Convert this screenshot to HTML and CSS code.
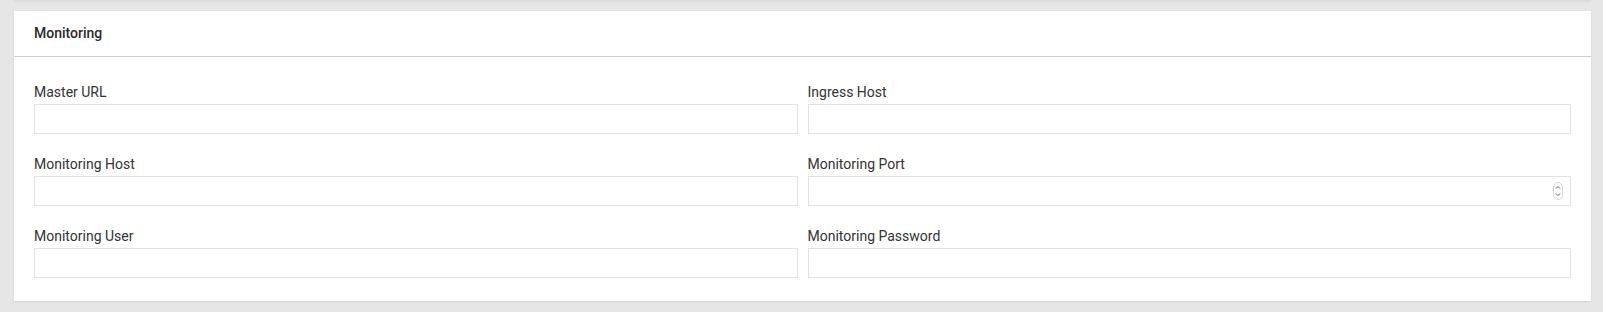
FILE: index.html
```html
<!DOCTYPE html>
<html lang="en">
<head>
    <meta charset="UTF-8">
    <meta name="viewport" content="width=device-width, initial-scale=1.0">
    <title>Monitoring</title>
    <link rel="stylesheet" href="styles.css">
</head>
<body>
    <div class="page">
        <div class="prev-shadow"></div>
        <div class="panel">
            <div class="panel-heading">Monitoring</div>
            <form class="panel-body">
                <div class="form-group">
                    <label for="master_url">Master URL</label>
                    <input type="text" id="master_url" name="master_url">
                </div>
                <div class="form-group">
                    <label for="ingress_host">Ingress Host</label>
                    <input type="text" id="ingress_host" name="ingress_host">
                </div>
                <div class="form-group">
                    <label for="monitoring_host">Monitoring Host</label>
                    <input type="text" id="monitoring_host" name="monitoring_host">
                </div>
                <div class="form-group">
                    <label for="monitoring_port">Monitoring Port</label>
                    <div class="number-field">
                        <input type="text" id="monitoring_port" name="monitoring_port" inputmode="numeric">
                        <span class="spinner">
                            <svg width="10" height="18" viewBox="0 0 10 18">
                                <rect x="0.5" y="0.5" width="9" height="17" rx="4.5" fill="#fff" stroke="#d6d6d6"/>
                                <path d="M3 6.5 L5 4.5 L7 6.5" fill="none" stroke="#555" stroke-width="1"/>
                                <path d="M3 11.5 L5 13.5 L7 11.5" fill="none" stroke="#555" stroke-width="1"/>
                            </svg>
                        </span>
                    </div>
                </div>
                <div class="form-group">
                    <label for="monitoring_user">Monitoring User</label>
                    <input type="text" id="monitoring_user" name="monitoring_user">
                </div>
                <div class="form-group">
                    <label for="monitoring_password">Monitoring Password</label>
                    <input type="password" id="monitoring_password" name="monitoring_password">
                </div>
            </form>
        </div>
    </div>
</body>
</html>
```

FILE: styles.css
```css
body {
    font-family: Roboto, 'Liberation Sans', sans-serif;
    background-color: #e6e6e6;
    margin: 0;
}
.page {
    padding: 0 12px 11px 14px;
}
.prev-shadow {
    height: 3px;
    margin-bottom: 8px;
    background: linear-gradient(#dadada, #e4e4e4);
}
.panel {
    background: white;
    box-shadow: 0 1px 2px rgba(0,0,0,0.08);
}
.panel-heading {
    padding: 0 20px;
    height: 45px;
    line-height: 45px;
    font-size: 14px;
    font-weight: 500;
    color: #2a2a2a;
    border-bottom: 1px solid #cdcdcd;
}
.panel-body {
    display: grid;
    grid-template-columns: 1fr 1fr;
    column-gap: 10px;
    row-gap: 22px;
    padding: 27px 20px 23px;
}
.form-group label {
    display: block;
    font-size: 14px;
    line-height: 16px;
    color: #333;
    margin-bottom: 4px;
}
.form-group input {
    display: block;
    width: 100%;
    height: 30px;
    box-sizing: border-box;
    border: 1px solid #e2e2e2;
    border-radius: 0;
    padding: 0 8px;
    font-family: inherit;
    font-size: 14px;
    outline: none;
}
.number-field {
    position: relative;
}
.spinner {
    position: absolute;
    right: 8px;
    top: 6px;
    height: 18px;
}
.spinner svg {
    display: block;
}
```
